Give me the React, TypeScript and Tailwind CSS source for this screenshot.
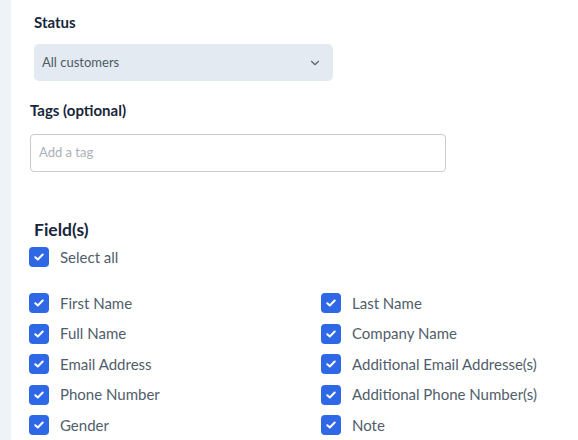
import { ChevronDown } from 'lucide-react';

const leftFields = ['First Name', 'Full Name', 'Email Address', 'Phone Number', 'Gender'];
const rightFields = ['Last Name', 'Company Name', 'Additional Email Addresse(s)', 'Additional Phone Number(s)', 'Note'];

function Checkbox() {
  return (
    <span className="flex h-[20px] w-[20px] shrink-0 items-center justify-center rounded-[4px] bg-[#2f68e6]">
      <svg width="10" height="8" viewBox="0 0 10 8" fill="none">
        <path d="M1.3 4.2 3.8 6.5 8.7 1.5" stroke="white" strokeWidth="2" strokeLinecap="round" strokeLinejoin="round" />
      </svg>
    </span>
  );
}

function CheckRow({ label }: { label: string }) {
  return (
    <label className="flex h-[20px] items-center gap-[11px] text-[15px] text-[#505d6b]">
      <Checkbox />
      <span>{label}</span>
    </label>
  );
}

export default function App() {
  return (
    <div className="flex h-[440px] w-[578px] bg-white font-['Lato','Open_Sans',sans-serif]">
      <div className="w-[11px] shrink-0 bg-[#eef3f8]" />
      <div className="flex flex-1 flex-col pl-[18px] pt-[12px]">
        {/* Status */}
        <div className="ml-[5px]">
          <div className="text-[15px] font-bold leading-[20px] text-[#17263a]">Status</div>
          <div className="mt-[12px] flex h-[37px] w-[299px] items-center justify-between rounded-[5px] bg-[#e4eaf1] pl-[8px] pr-[11px]">
            <span className="text-[13px] text-[#4e5a67]">All customers</span>
            <ChevronDown className="h-[14px] w-[14px] text-[#5a6470]" strokeWidth={2} />
          </div>
        </div>

        {/* Tags */}
        <div className="mt-[19px] ml-[1px]">
          <div className="text-[15px] font-bold leading-[20px] text-[#17263a]">Tags (optional)</div>
          <div className="mt-[14px] flex h-[38px] w-[416px] items-center rounded-[4px] border border-[#c6ccd2] px-[8px]">
            <span className="text-[13px] text-[#a9b0b8]">Add a tag</span>
          </div>
        </div>

        {/* Fields */}
        <div className="mt-[47px]">
          <div className="ml-[5px] text-[17.5px] font-bold leading-[22px] text-[#17263a]">Field(s)</div>
          <div className="mt-[6px]">
            <CheckRow label="Select all" />
          </div>
          <div className="mt-[26px] grid grid-cols-[292px_1fr] gap-y-[10.5px]">
            {leftFields.map((f, i) => (
              <div key={f} className="contents">
                <CheckRow label={f} />
                <CheckRow label={rightFields[i]} />
              </div>
            ))}
          </div>
        </div>
      </div>
    </div>
  );
}
